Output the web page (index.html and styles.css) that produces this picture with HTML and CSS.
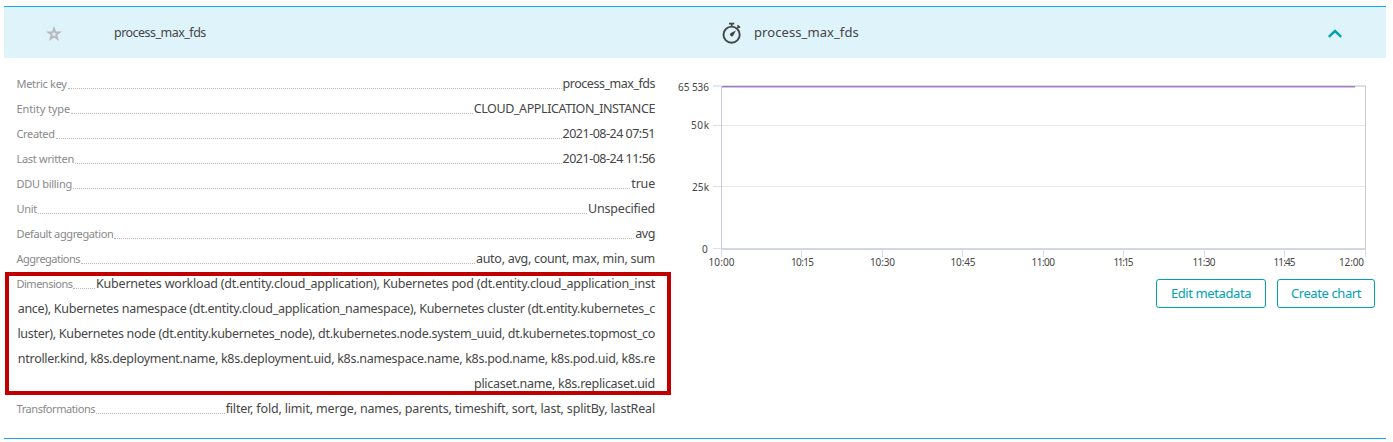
FILE: index.html
```
<!DOCTYPE html>
<html lang="en">
<head>
<meta charset="utf-8">
<title>process_max_fds</title>
<link rel="stylesheet" href="styles.css">
</head>
<body>
<main class="metric">
  <header class="head">
    <svg class="star" width="16" height="16" viewBox="0 0 16 16"><path fill="#b7babc" fill-rule="evenodd" d="M8 0 10 5.4H16L11.3 9 13 15 8 11.5 3 15 4.7 9 0 5.4H6ZM8 5.2 7.3 7.2H5.4L6.8 8.4 6.2 10.5 8 9.3 9.8 10.5 9.2 8.4 10.6 7.2H8.7Z"/></svg>
    <span class="name">process_max_fds</span>
    <svg class="watch" width="20" height="22" viewBox="0 0 20 22"><g fill="none" stroke="#454646"><circle cx="9.6" cy="12.7" r="8.1" stroke-width="1.9"/><path stroke-width="1.7" d="M7 1.6H12.3M9.7 2V4.5M15.4 3.3 18 5.7M16.8 4.5 15.4 6"/></g><path fill="#454646" d="M13.9 8.6 11.3 13.5A1.8 1.8 0 1 1 8.8 11Z"/></svg>
    <span class="title">process_max_fds</span>
    <svg class="chevron" width="14" height="9" viewBox="0 0 14 9"><path fill="none" stroke="#00a1b2" stroke-width="2.4" d="M.8 7.8 7 2 13.2 7.8"/></svg>
  </header>
  <div class="body">
    <section class="details">
      <div class="row"><span class="label l1">Metric key</span><i class="dots"></i><span class="value v1">process_max_fds</span></div>
      <div class="row"><span class="label l2">Entity type</span><i class="dots"></i><span class="value v2">CLOUD_APPLICATION_INSTANCE</span></div>
      <div class="row"><span class="label l3">Created</span><i class="dots"></i><span class="value v3">2021-08-24 07:51</span></div>
      <div class="row"><span class="label l4">Last written</span><i class="dots"></i><span class="value v4">2021-08-24 11:56</span></div>
      <div class="row"><span class="label l5">DDU billing</span><i class="dots"></i><span class="value v5">true</span></div>
      <div class="row"><span class="label l6">Unit</span><i class="dots"></i><span class="value v6">Unspecified</span></div>
      <div class="row"><span class="label l7">Default aggregation</span><i class="dots"></i><span class="value v7">avg</span></div>
      <div class="row"><span class="label l8">Aggregations</span><i class="dots"></i><span class="value v8">auto, avg, count, max, min, sum</span></div>
      <div class="dimensions">
        <div class="row"><span class="label l9">Dimensions</span><i class="dots"></i><span class="value d1">Kubernetes workload (dt.entity.cloud_application), Kubernetes pod (dt.entity.cloud_application_inst</span></div>
        <div class="row more"><span class="value d2">ance), Kubernetes namespace (dt.entity.cloud_application_namespace), Kubernetes cluster (dt.entity.kubernetes_c</span></div>
        <div class="row more"><span class="value d3">luster), Kubernetes node (dt.entity.kubernetes_node), dt.kubernetes.node.system_uuid, dt.kubernetes.topmost_co</span></div>
        <div class="row more"><span class="value d4">ntroller.kind, k8s.deployment.name, k8s.deployment.uid, k8s.namespace.name, k8s.pod.name, k8s.pod.uid, k8s.re</span></div>
        <div class="row more"><span class="value d5">plicaset.name, k8s.replicaset.uid</span></div>
      </div>
      <div class="row"><span class="label l10">Transformations</span><i class="dots"></i><span class="value v10">filter, fold, limit, merge, names, parents, timeshift, sort, last, splitBy, lastReal</span></div>
    </section>
    <section class="panel">
      <svg class="chart" width="715" height="221" viewBox="671 58 715 221">
        <g fill="none">
          <path stroke="#e6e8ea" d="M722 125.5H1365M722 186.5H1365"/>
          <path stroke="#dedede" stroke-width="2" d="M722 86H1366"/>
          <path stroke="#cccccf" d="M1365.5 86V248"/>
          <path stroke="#d9dff0" d="M713 125.5H721M713 186.5H721M713 248.5H721M801.5 249V257M882.5 249V257M962.5 249V257M1043.5 249V257M1123.5 249V257M1204.5 249V257M1284.5 249V257M1365.5 249V257M721.5 249V257"/>
          <path stroke="#e3e8f4" stroke-width="2" d="M713 86H721"/>
          <path stroke="#c9cde2" d="M721.5 86V249"/>
          <path stroke="#d3d7e5" stroke-width="2" d="M721 249H1366"/>
          <path stroke="#d6c3e2" d="M722 87.5H1355"/>
          <path stroke="#a47dc0" d="M722 86.5H1355"/>
        </g>
        <g class="axis">
          <text x="678" y="91" textLength="31">65 536</text>
          <text x="691" y="129" textLength="18">50k</text>
          <text x="692" y="191" textLength="17">25k</text>
          <text x="702" y="253">0</text>
          <text x="708.5" y="266" textLength="26">10:00</text>
          <text x="791" y="266" textLength="23">10:15</text>
          <text x="870" y="266" textLength="25">10:30</text>
          <text x="950.5" y="266" textLength="25">10:45</text>
          <text x="1031.5" y="266" textLength="23.5">11:00</text>
          <text x="1113.5" y="266" textLength="20">11:15</text>
          <text x="1192.5" y="266" textLength="23">11:30</text>
          <text x="1273.5" y="266" textLength="22">11:45</text>
          <text x="1339" y="266" textLength="25">12:00</text>
        </g>
      </svg>
      <div class="actions"><button class="btn edit">Edit metadata</button><button class="btn create">Create chart</button></div>
    </section>
  </div>
</main>
</body>
</html>
```
FILE: styles.css
```
*, *::after { box-sizing: border-box; }
body { margin: 0; background: #fff; color: #454646; font-family: "Noto Sans", "Open Sans", sans-serif; font-size: 12px; }
.metric { margin: 6px 7px 0 4px; height: 433px; border-top: 1px solid #14a8f5; border-bottom: 1px solid #14a8f5; }
.head { display: flex; align-items: center; height: 51px; background: #dff3fa; }
.star { margin-left: 42px; margin-top: 2px; }
.name { width: 608px; margin-left: 52px; font-size: 12.5px; letter-spacing: -0.52px; }
.title { width: 574px; margin-left: 12px; padding-bottom: 2px; font-size: 13px; letter-spacing: 0.08px; }
.chevron { margin-top: 1px; }
.body { display: flex; }
.details { width: 667px; padding: 13px 16px 0 12.5px; }
.row { display: flex; height: 25px; line-height: 25px; white-space: nowrap; }
.more { justify-content: flex-end; }
.label { font-size: 11px; color: #898989; letter-spacing: -0.3px; }
.l2 { letter-spacing: -0.1px; }
.l3 { letter-spacing: -0.35px; }
.l7 { letter-spacing: -0.38px; }
.l8, .l9 { letter-spacing: -0.5px; }
.l10 { letter-spacing: -0.43px; }
.dots { flex: 1; height: 18px; margin: 0 1px; border-bottom: 1px dotted #b8b8b8; }
.value { font-size: 12.5px; letter-spacing: -0.4px; }
.v1 { letter-spacing: -0.48px; }
.v3, .v4 { letter-spacing: -0.5px; }
.v5, .v6 { letter-spacing: -0.2px; }
.v8, .d2 { letter-spacing: -0.28px; }
.v10 { letter-spacing: -0.17px; }
.d1 { letter-spacing: -0.21px; }
.d3, .d4 { letter-spacing: -0.29px; }
.d5 { letter-spacing: -0.27px; }
.dimensions { position: relative; }
.dimensions::after { content: ""; position: absolute; left: -12px; right: -16px; top: 1px; height: 123px; border: 4px solid #c00000; }
.panel { flex: 1; }
.chart { display: block; }
.axis { font-size: 10px; fill: #454646; }
.actions { display: flex; justify-content: flex-end; gap: 11px; padding-right: 11px; }
.btn { height: 29px; padding: 0 0 2px; border: 1px solid #00a1b2; border-radius: 3px; background: #fff; color: #00a1b2; font-family: inherit; font-size: 13px; letter-spacing: -0.4px; white-space: nowrap; }
.edit { width: 110px; }
.create { width: 98px; }
```
